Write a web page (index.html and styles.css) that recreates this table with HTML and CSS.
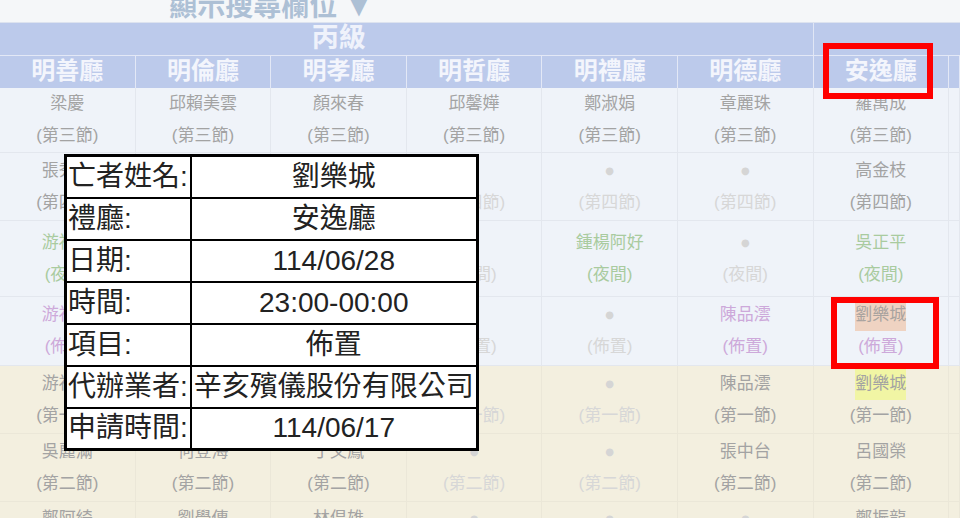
FILE: index.html
```html
<!DOCTYPE html>
<html lang="zh-Hant">
<head>
<meta charset="utf-8">
<link rel="stylesheet" href="styles.css">
</head>
<body>
<div class="topbar"><div class="toptext">顯示搜尋欄位 ▼</div></div>
<div class="head1"><div class="group">丙級</div><div class="group2"></div></div>
<div class="head2">
  <div class="hc">明善廳</div><div class="hc">明倫廳</div><div class="hc">明孝廳</div><div class="hc">明哲廳</div><div class="hc">明禮廳</div><div class="hc">明德廳</div><div class="hc">安逸廳</div><div class="hc"></div>
</div>

<div class="row blue ra">
  <div class="cell"><span>梁慶</span><span>(第三節)</span></div>
  <div class="cell"><span>邱賴美雲</span><span>(第三節)</span></div>
  <div class="cell"><span>顏來春</span><span>(第三節)</span></div>
  <div class="cell"><span>邱馨嬅</span><span>(第三節)</span></div>
  <div class="cell"><span>鄭淑娟</span><span>(第三節)</span></div>
  <div class="cell"><span>章麗珠</span><span>(第三節)</span></div>
  <div class="cell"><span>羅萬成</span><span>(第三節)</span></div>
  <div class="cell"></div>
</div>
<div class="row blue rb">
  <div class="cell"><span>張秀蘭</span><span>(第四節)</span></div>
  <div class="cell f"><span class="dot">●</span><span>(第四節)</span></div>
  <div class="cell f"><span class="dot">●</span><span>(第四節)</span></div>
  <div class="cell f"><span class="dot">●</span><span>(第四節)</span></div>
  <div class="cell f"><span class="dot">●</span><span>(第四節)</span></div>
  <div class="cell f"><span class="dot">●</span><span>(第四節)</span></div>
  <div class="cell"><span>高金枝</span><span>(第四節)</span></div>
  <div class="cell"></div>
</div>
<div class="row blue rc">
  <div class="cell g"><span>游福來</span><span>(夜間)</span></div>
  <div class="cell f"><span class="dot">●</span><span>(夜間)</span></div>
  <div class="cell f"><span class="dot">●</span><span>(夜間)</span></div>
  <div class="cell f"><span class="dot">●</span><span>(夜間)</span></div>
  <div class="cell g"><span>鍾楊阿好</span><span>(夜間)</span></div>
  <div class="cell f"><span class="dot">●</span><span>(夜間)</span></div>
  <div class="cell g"><span>吳正平</span><span>(夜間)</span></div>
  <div class="cell"></div>
</div>
<div class="row blue rd">
  <div class="cell p"><span>游福來</span><span>(佈置)</span></div>
  <div class="cell f"><span class="dot">●</span><span>(佈置)</span></div>
  <div class="cell f"><span class="dot">●</span><span>(佈置)</span></div>
  <div class="cell f"><span class="dot">●</span><span>(佈置)</span></div>
  <div class="cell f"><span class="dot">●</span><span>(佈置)</span></div>
  <div class="cell p"><span>陳品澐</span><span>(佈置)</span></div>
  <div class="cell p"><span class="hl-peach">劉樂城</span><span>(佈置)</span></div>
  <div class="cell"></div>
</div>
<div class="row beige rb">
  <div class="cell"><span>游福來</span><span>(第一節)</span></div>
  <div class="cell f"><span class="dot">●</span><span>(第一節)</span></div>
  <div class="cell f"><span class="dot">●</span><span>(第一節)</span></div>
  <div class="cell f"><span class="dot">●</span><span>(第一節)</span></div>
  <div class="cell f"><span class="dot">●</span><span>(第一節)</span></div>
  <div class="cell"><span>陳品澐</span><span>(第一節)</span></div>
  <div class="cell"><span class="hl-yellow">劉樂城</span><span>(第一節)</span></div>
  <div class="cell"></div>
</div>
<div class="row beige rb">
  <div class="cell"><span>吳麗滿</span><span>(第二節)</span></div>
  <div class="cell"><span>何登海</span><span>(第二節)</span></div>
  <div class="cell"><span>丁文鳳</span><span>(第二節)</span></div>
  <div class="cell f"><span class="dot">●</span><span>(第二節)</span></div>
  <div class="cell f"><span class="dot">●</span><span>(第二節)</span></div>
  <div class="cell"><span>張中台</span><span>(第二節)</span></div>
  <div class="cell"><span>呂國榮</span><span>(第二節)</span></div>
  <div class="cell"></div>
</div>
<div class="row beige rb top">
  <div class="cell"><span>鄭阿綺</span><span>(第三節)</span></div>
  <div class="cell"><span>劉學傳</span><span>(第三節)</span></div>
  <div class="cell"><span>林倡雄</span><span>(第三節)</span></div>
  <div class="cell f"><span class="dot">●</span><span>(第三節)</span></div>
  <div class="cell f"><span class="dot">●</span><span>(第三節)</span></div>
  <div class="cell f"><span class="dot">●</span><span>(第三節)</span></div>
  <div class="cell"><span>鄭振龍</span><span>(第三節)</span></div>
  <div class="cell"></div>
</div>

<div class="mark mark-hall"></div>
<div class="mark mark-cell"></div>

<table class="pop">
  <tr><td class="k">亡者姓名:</td><td class="v">劉樂城</td></tr>
  <tr><td class="k">禮廳:</td><td class="v">安逸廳</td></tr>
  <tr><td class="k">日期:</td><td class="v">114/06/28</td></tr>
  <tr><td class="k">時間:</td><td class="v">23:00-00:00</td></tr>
  <tr><td class="k">項目:</td><td class="v">佈置</td></tr>
  <tr><td class="k">代辦業者:</td><td class="v">辛亥殯儀股份有限公司</td></tr>
  <tr><td class="k">申請時間:</td><td class="v">114/06/17</td></tr>
</table>
</body>
</html>
```
FILE: styles.css
```css
* { box-sizing: border-box; }
html, body {
  margin: 0;
  width: 960px;
  height: 518px;
  overflow: hidden;
}
body {
  position: relative;
  background: #f3efdf;
  font-family: "Liberation Sans", "Noto Sans CJK TC", sans-serif;
}
.topbar {
  height: 22px;
  overflow: hidden;
  background: #f5f7f9;
}
.toptext {
  width: 542px;
  margin-top: -8px;
  text-align: center;
  font-size: 28px;
  line-height: 30px;
  font-weight: 700;
  color: #adc0d5;
  white-space: nowrap;
}
.head1 {
  display: grid;
  grid-template-columns: 813.6px 1fr;
  height: 33px;
  background: #bccaeb;
  border-top: 1px solid #dde3ef;
}
.group {
  padding-right: 135px;
  text-align: center;
  font-size: 27px;
  font-weight: 700;
  line-height: 31px;
  color: #eff2fb;
  border-right: 1px solid #e0e6f5;
}
.head2 {
  display: grid;
  grid-template-columns: repeat(7, 135.6px) 1fr;
  height: 33px;
  background: #bccaeb;
  border-top: 1px solid #e3e8f6;
}
.hc {
  text-align: center;
  font-size: 24px;
  font-weight: 700;
  line-height: 30px;
  color: #f3f5fc;
  border-right: 1px solid #e3e8f6;
}
.row {
  display: grid;
  grid-template-columns: repeat(7, 135.6px) 1fr;
}
.blue { background: #eff3f9; }
.beige { background: #f3efdf; }
.ra { height: 65px; padding-bottom: 6px; }
.rb { height: 68px; }
.rc { height: 76px; }
.rd { height: 69px; }
.top { height: 80px; }
.top .cell { justify-content: flex-start; padding-top: 1px; }
.cell {
  display: flex;
  flex-direction: column;
  align-items: center;
  justify-content: center;
  font-size: 17px;
  line-height: 32px;
  color: #a3a3a3;
  border-right: 1px solid #e3e7ee;
  border-bottom: 1px solid #e3e7ee;
  white-space: nowrap;
}
.beige .cell {
  border-color: #ebe7d8;
}
.g { color: #a9cb9f; }
.p { color: #cda9da; }
.f { color: #d7d7d7; }
.dot {
  font-family: "DejaVu Sans", sans-serif;
  font-size: 10px;
  color: #d5d5d5;
}
.hl-peach { background: #efd3c2; color: #a9a39f; }
.hl-yellow { background: #f1f5a4; color: #a3a3a3; }

.mark {
  position: absolute;
  border: 6px solid #ff0000;
}
.mark-hall { left: 823px; top: 43px; width: 110px; height: 56px; }
.mark-cell { left: 831px; top: 297px; width: 108px; height: 72px; }

.pop {
  position: absolute;
  left: 64px;
  top: 154px;
  width: 415px;
  border-collapse: collapse;
  border: 3px solid #000;
  background: #fff;
  font-size: 28px;
  color: #222;
}
.pop td {
  border: 2px solid #000;
  padding: 0 1px;
  height: 42px;
  line-height: 38px;
  white-space: nowrap;
}
.pop td.k { width: 125px; text-align: left; }
.pop td.v { text-align: center; }
```
